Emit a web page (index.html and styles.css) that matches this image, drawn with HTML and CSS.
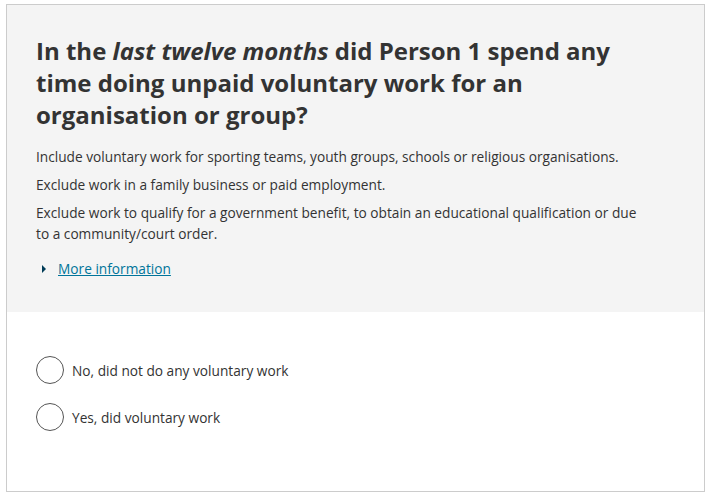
FILE: index.html
```html
<!DOCTYPE html>
<html lang="en">
<head>
<meta charset="utf-8">
<title>Voluntary work</title>
<link rel="stylesheet" href="styles.css">
</head>
<body>
<div class="card">
  <section class="question">
    <h1 class="title">In the <em>last twelve months</em> did Person 1 spend any time doing unpaid voluntary work for an organisation or group?</h1>
    <p class="desc">Include voluntary work for sporting teams, youth groups, schools or religious organisations.</p>
    <p class="desc">Exclude work in a family business or paid employment.</p>
    <p class="desc">Exclude work to qualify for a government benefit, to obtain an educational qualification or due to a community/court order.</p>
    <div class="more">
      <span class="caret"></span>
      <a href="#" class="more-link">More information</a>
    </div>
  </section>
  <section class="answers">
    <label class="option"><span class="radio"></span><span class="option-text">No, did not do any voluntary work</span></label>
    <label class="option"><span class="radio"></span><span class="option-text">Yes, did voluntary work</span></label>
  </section>
</div>
</body>
</html>
```
FILE: styles.css
```css
html, body {
  margin: 0;
  padding: 0;
  background: #ffffff;
}
body {
  padding: 4px 2px 1px 6px;
  font-family: "Open Sans", "Noto Sans", sans-serif;
  color: #333333;
}
.card {
  border: 1px solid #cccccc;
  box-sizing: border-box;
  height: 488px;
  display: flex;
  flex-direction: column;
}
.question {
  background: #f4f4f4;
  padding: 30px 59px 0 29px;
  height: 307px;
  box-sizing: border-box;
}
.title {
  margin: 0 0 15px 0;
  font-size: 24px;
  line-height: 32px;
  font-weight: 700;
  color: #333333;
}
.title em {
  font-style: italic;
}
.desc {
  margin: 0 0 7px 0;
  font-size: 13.7px;
  line-height: 21px;
}
.more {
  display: flex;
  align-items: center;
  margin-top: 14px;
  padding-left: 6px;
}
.caret {
  width: 0;
  height: 0;
  border-top: 4px solid transparent;
  border-bottom: 4px solid transparent;
  border-left: 4px solid #003c57;
  margin-right: 12px;
}
.more-link {
  font-size: 13.7px;
  line-height: 21px;
  color: #00749a;
  text-decoration: underline;
}
.answers {
  padding: 44px 29px 0 29px;
  display: flex;
  flex-direction: column;
  gap: 19px;
}
.option {
  display: flex;
  align-items: center;
  font-size: 13.7px;
  color: #333333;
}
.radio {
  width: 26px;
  height: 26px;
  border: 1.5px solid #555555;
  border-radius: 50%;
  background: #ffffff;
  margin-right: 8px;
  flex: none;
}
.option-text {
  line-height: 21px;
}
```
